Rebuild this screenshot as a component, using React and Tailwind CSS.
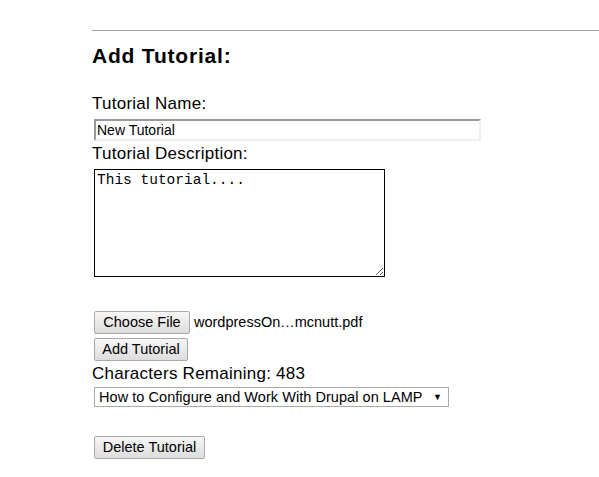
import React from 'react';

const btn =
  'block h-[23px] px-[7px] text-[14.5px] leading-none text-black rounded-[2px] border border-[#a9a9a9] bg-gradient-to-b from-[#f7f7f7] to-[#dddddd]';

const App = () => {
  return (
    <div className="min-h-[477px] bg-white pl-[92px] pt-[30px] text-black" style={{ fontFamily: '"Liberation Sans", Arial, sans-serif' }}>
      <div className="border-t border-[#a0a0a0]" />

      <h2 className="mt-[12px] text-[21px] font-bold leading-[25px] tracking-[0.8px]">Add Tutorial:</h2>

      <div className="mt-[26px] text-[17px] leading-[20px] tracking-[0.25px]">Tutorial Name:</div>
      <input
        type="text"
        defaultValue="New Tutorial"
        className="mt-[5px] ml-[2px] block h-[22px] w-[387px] border-2 border-t-[#9a9a9a] border-l-[#9a9a9a] border-b-[#eeeeee] border-r-[#eeeeee] px-[1px] text-[14px] leading-none outline-none"
      />

      <div className="mt-[3px] text-[17px] leading-[20px] tracking-[0.25px]">Tutorial Description:</div>
      <textarea
        defaultValue="This tutorial...."
        className="mt-[5px] ml-[2px] block h-[108px] w-[291px] border border-black px-[2px] py-[2px] text-[14.5px] leading-[16px]"
        style={{ fontFamily: '"Liberation Mono", "Courier New", monospace' }}
      />

      <div className="mt-[34px] ml-[2px] flex items-center gap-[4px]">
        <button className={btn + ' border-[#7eb4ea] w-[96px]'}>Choose File</button>
        <span className="text-[14.5px]">wordpressOn…mcnutt.pdf</span>
      </div>
      <button className={btn + ' mt-[4px] ml-[2px] w-[94px]'}>Add Tutorial</button>

      <div className="mt-[3px] text-[17px] leading-[20px] tracking-[0.25px]">Characters Remaining: 483</div>

      <div className="relative mt-[3px] ml-[2px] h-[20px] w-[355px] border border-[#a9a9a9] bg-white">
        <span className="absolute left-[4px] top-[1px] text-[14.5px] leading-[16px] tracking-[0.05px] text-black">How to Configure and Work With Drupal on LAMP</span>
        <span className="absolute right-[6px] top-[3px] text-[9px] leading-[12px]">▼</span>
      </div>

      <button className={btn + ' mt-[29px] ml-[2px] w-[111px]'}>Delete Tutorial</button>
    </div>
  );
};

export default App;
